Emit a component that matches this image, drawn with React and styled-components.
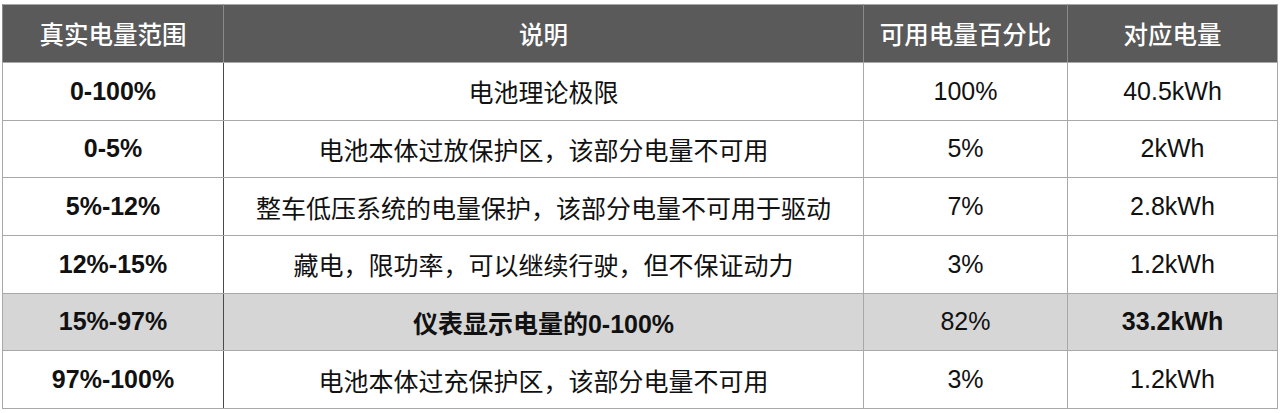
import React from 'react';
import styled, { createGlobalStyle } from 'styled-components';

const GlobalStyle = createGlobalStyle`
   html, body {
      margin: 0;
      padding: 0;
      background: #ffffff;
   }
   body {
      font-family: "Liberation Sans", "Noto Sans CJK SC", sans-serif;
      color: #111111;
   }
`

const Page = styled.div`
   padding: 4px 3px 0 2px;
`

const Table = styled.table`
   width: 1275px;
   border-collapse: collapse;
   table-layout: fixed;
   border: 1px solid #a8a8a8;
`

const HeadCell = styled.th`
   height: 57px;
   padding: 0;
   background: #5a5a5a;
   color: #ffffff;
   font-size: 24.5px;
   font-weight: 500;
   text-align: center;
   vertical-align: middle;
   border-left: 1px solid #8a8a8a;
   border-bottom: 1px solid #a8a8a8;
`

const Row = styled.tr`
   height: 57.67px;
   background: ${(p) => (p.$highlight ? '#d6d6d6' : '#ffffff')};
`

const Cell = styled.td`
   padding: 0;
   text-align: center;
   vertical-align: middle;
   border: 1px solid #a8a8a8;
   font-size: 25px;
   font-weight: ${(p) => (p.$bold ? 700 : 400)};
   white-space: nowrap;
   &:first-child {
      border-right: 1px solid #4a4a4a;
   }
`

const columns = [
   { title: '真实电量范围', width: 221 },
   { title: '说明', width: 640 },
   { title: '可用电量百分比', width: 204 },
   { title: '对应电量', width: 210 },
];

const rows = [
   { range: '0-100%', note: '电池理论极限', pct: '100%', energy: '40.5kWh' },
   { range: '0-5%', note: '电池本体过放保护区，该部分电量不可用', pct: '5%', energy: '2kWh' },
   { range: '5%-12%', note: '整车低压系统的电量保护，该部分电量不可用于驱动', pct: '7%', energy: '2.8kWh' },
   { range: '12%-15%', note: '藏电，限功率，可以继续行驶，但不保证动力', pct: '3%', energy: '1.2kWh' },
   { range: '15%-97%', note: '仪表显示电量的0-100%', pct: '82%', energy: '33.2kWh', highlight: true },
   { range: '97%-100%', note: '电池本体过充保护区，该部分电量不可用', pct: '3%', energy: '1.2kWh' },
];

function App() {
   return (
      <Page>
         <GlobalStyle />
         <Table>
            <colgroup>
               {columns.map((c) => (
                  <col key={c.title} style={{ width: c.width }} />
               ))}
            </colgroup>
            <thead>
               <tr>
                  {columns.map((c) => (
                     <HeadCell key={c.title}>{c.title}</HeadCell>
                  ))}
               </tr>
            </thead>
            <tbody>
               {rows.map((r) => (
                  <Row key={r.range} $highlight={r.highlight}>
                     <Cell $bold>{r.range}</Cell>
                     <Cell $bold={r.highlight}>{r.note}</Cell>
                     <Cell>{r.pct}</Cell>
                     <Cell $bold={r.highlight}>{r.energy}</Cell>
                  </Row>
               ))}
            </tbody>
         </Table>
      </Page>
   );
}

export default App;
